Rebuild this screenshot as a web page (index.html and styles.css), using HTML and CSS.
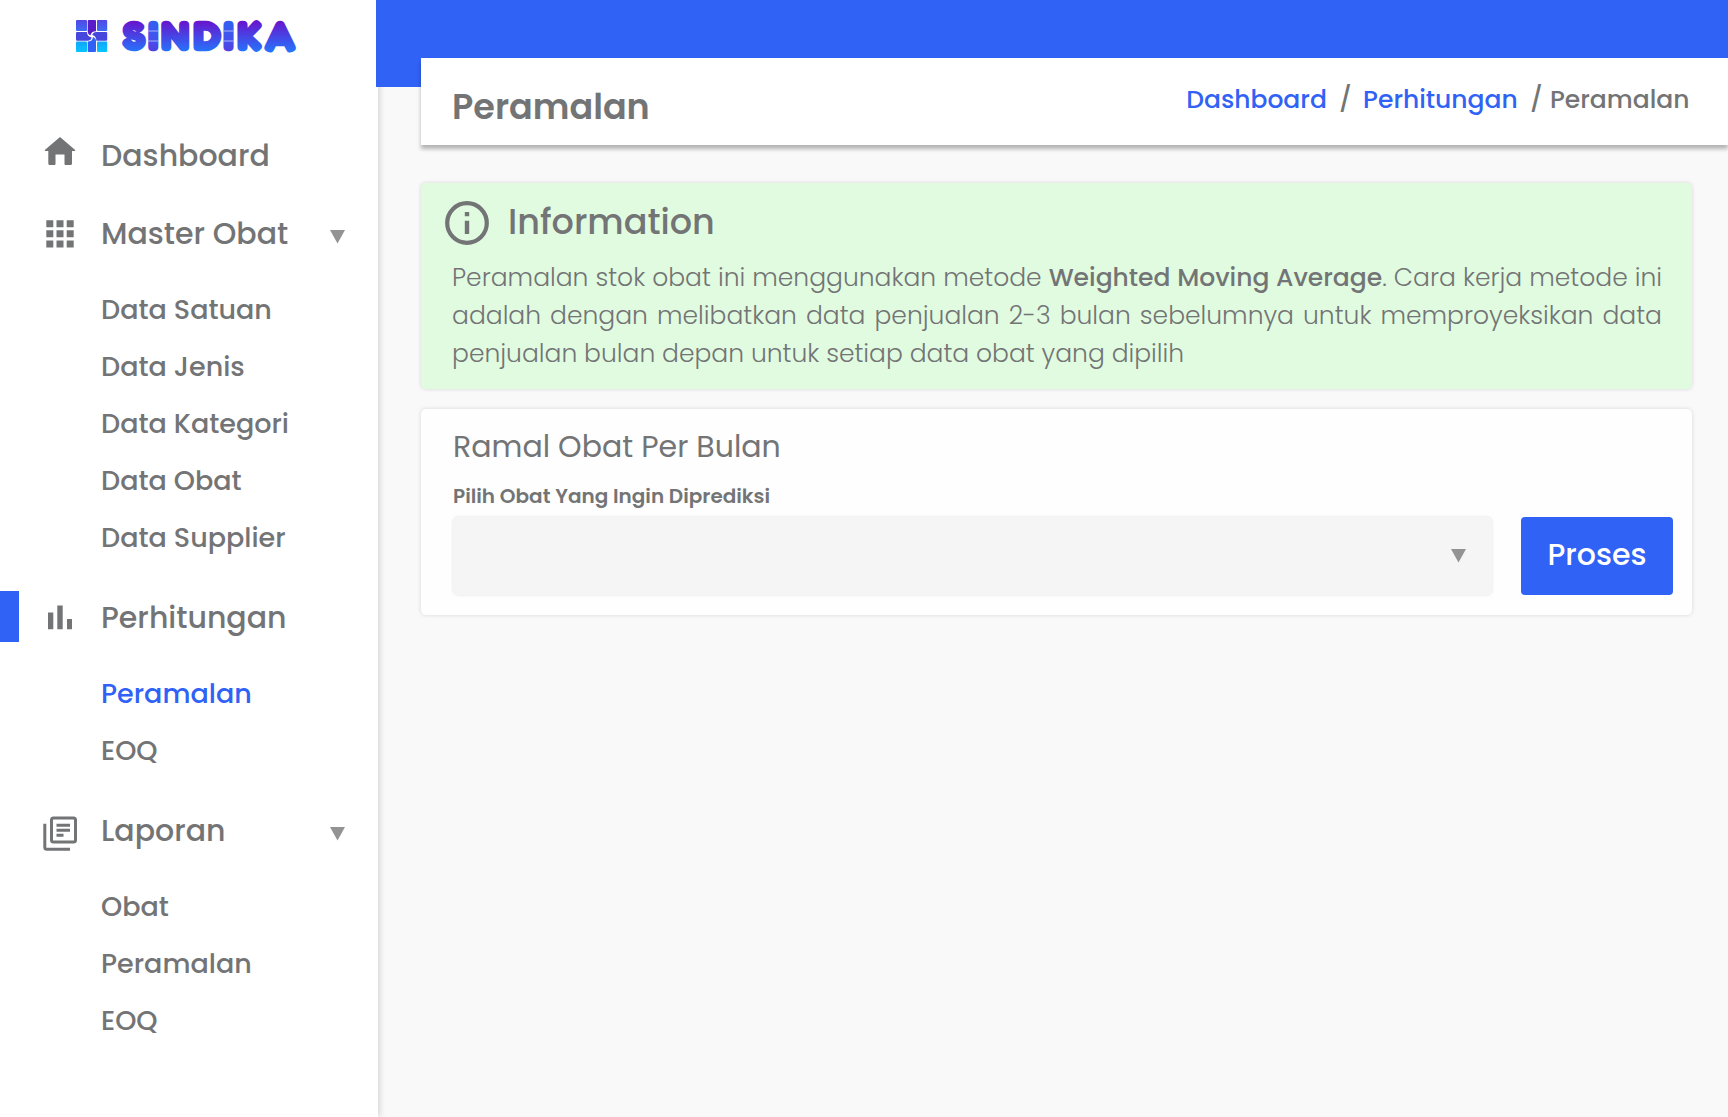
FILE: index.html
```
<!DOCTYPE html>
<html lang="id">
<head>
<meta charset="utf-8">
<title>Sindika - Peramalan</title>
<link rel="stylesheet" href="styles.css">
</head>
<body>
<div class="app">
  <aside class="sidebar">
    <svg class="logo" width="240" height="60" viewBox="66 6 240 60" role="img" aria-label="Sindika">
      <defs>
        <linearGradient id="word" gradientUnits="userSpaceOnUse" x1="0" y1="20" x2="0" y2="52"><stop offset="0" stop-color="#6a11cb"/><stop offset="1" stop-color="#2575fc"/></linearGradient>
        <linearGradient id="stem" gradientUnits="userSpaceOnUse" x1="0" y1="20" x2="0" y2="52"><stop offset="0" stop-color="#2f62f2"/><stop offset=".6" stop-color="#4452ec"/><stop offset="1" stop-color="#5040e0"/></linearGradient>
        <linearGradient id="corner" x1="0" y1="0" x2="0" y2="1"><stop offset="0" stop-color="#5148e4"/><stop offset="1" stop-color="#3f6af6"/></linearGradient>
        <linearGradient id="foot" x1="0" y1="0" x2="0" y2="1"><stop offset="0" stop-color="#12a5fb"/><stop offset="1" stop-color="#06c4ff"/></linearGradient>
      </defs>
      <g>
        <rect x="76" y="20" width="11" height="11" rx="1" fill="url(#corner)"/>
        <rect x="97" y="20" width="10.2" height="11" rx="1" fill="url(#corner)"/>
        <rect x="76" y="41.500" width="11" height="10.500" rx="1" fill="url(#foot)"/>
        <rect x="97" y="41.500" width="10.200" height="10.500" rx="1" fill="url(#foot)"/>
        <path d="M87.700 21q0-1 1-1h6.300q1 0 1 1v10.200q-4.800 0-5.600 4.300-2.700-1-2.700-4z" fill="#5a1cc8"/>
        <path d="M107.200 33v6.500q0 1.300-1 1.300H96.400q0-4.800-4.200-5.800 1-3 4-3h10q1 0 1 1z" fill="#4647dc"/>
        <path d="M96 51q0 1-1 1h-6.300q-1 0-1-1V41.500q4.800 0 5.300-4.500 3 1 3 4z" fill="#2f62f4"/>
        <path d="M76 39.500V33.200q0-1.200 1-1.200h10q0 4.600 4.700 5.600-1 3.200-4 3.200H77q-1 0-1-1.300z" fill="#4647dc"/>
      </g>
      <g class="wordmark" fill="url(#word)" stroke="url(#word)">
        <text x="134" y="50.300">S</text><text x="175.200" y="50.300">N</text><text x="207.200" y="50.300">D</text><text x="249.500" y="50.300">K</text><text x="280" y="50.300">A</text>
      </g>
      <g class="wordmark" fill="url(#stem)" stroke="url(#stem)">
        <text x="153.200" y="50.300">I</text><text x="228.500" y="50.300">I</text>
      </g>
      <path d="M148 31h10.500M148 41h10.500M223 31h10.500M223 41h10.500" stroke="#a9b4f8" stroke-width="1"/>
    </svg>
    <nav class="nav">
      <a class="item">
        <svg class="icon" viewBox="0 0 34 46"><path d="M17 4 32.200 17q.3 1-.7 1H29v12.500q0 1.500-1.500 1.500H22.500q-1 0-1-1v-9.500h-9V31q0 1-1 1H6.800q-1.500 0-1.500-1.500V18H2.500q-1 0-.7-1z"/></svg>
        <span>Dashboard</span>
      </a>
      <a class="item">
        <svg class="icon" viewBox="0 0 34 46"><path d="M3.300 9.200h7v7h-7zm10.200 0h7v7h-7zm10.200 0h7v7h-7zM3.300 19.300h7v7h-7zm10.200 0h7v7h-7zm10.200 0h7v7h-7zM3.300 29.400h7v7h-7zm10.200 0h7v7h-7zm10.200 0h7v7h-7z"/></svg>
        <span>Master Obat</span>
        <svg class="caret" viewBox="0 0 15 14"><path d="M0 0h15L7.500 13.500z"/></svg>
      </a>
      <div class="sub">
        <a>Data Satuan</a><a>Data Jenis</a><a>Data Kategori</a><a>Data Obat</a><a>Data Supplier</a>
      </div>
      <a class="item current">
        <svg class="icon" viewBox="0 0 34 46"><path d="M5 17.500h5.300V34.300H5zM14.300 10.500h5.400v23.800h-5.400zM24 24h5v10.300h-5z"/></svg>
        <span>Perhitungan</span>
      </a>
      <div class="sub">
        <a class="active">Peramalan</a><a>EOQ</a>
      </div>
      <a class="item">
        <svg class="icon outline" viewBox="0 0 34 46"><rect x="8.500" y="10" width="24" height="24" rx="2"/><path d="M1.800 15.800v23.500q0 2 2 2h23.200M13.500 17.200H27M13.500 22.200H27M13.500 27.200h7"/></svg>
        <span>Laporan</span>
        <svg class="caret" viewBox="0 0 15 14"><path d="M0 0h15L7.500 13.500z"/></svg>
      </a>
      <div class="sub">
        <a>Obat</a><a>Peramalan</a><a>EOQ</a>
      </div>
    </nav>
  </aside>
  <main class="main">
    <div class="banner"></div>
    <header class="page-head">
      <h1>Peramalan</h1>
      <div class="crumbs"><a>Dashboard</a><i>/</i><a>Perhitungan</a><i class="last">/</i><span>Peramalan</span></div>
    </header>
    <section class="card info">
      <div class="info-head">
        <svg width="44" height="44" viewBox="0 0 44 44"><circle cx="22" cy="22" r="19.800" fill="none" stroke="#737475" stroke-width="4.200"/><path d="M19.800 11h4.400v4.300h-4.400zM19.800 19.800h4.400V33h-4.400z" fill="#737475"/></svg>
        <h2>Information</h2>
      </div>
      <p>Peramalan stok obat ini menggunakan metode <b>Weighted Moving Average</b>. Cara kerja metode ini adalah dengan melibatkan data penjualan 2-3 bulan sebelumnya untuk memproyeksikan data penjualan bulan depan untuk setiap data obat yang dipilih</p>
    </section>
    <section class="card form">
      <h3>Ramal Obat Per Bulan</h3>
      <label>Pilih Obat Yang Ingin Diprediksi</label>
      <div class="row">
        <div class="select"><svg class="caret" viewBox="0 0 15 14"><path d="M0 0h15L7.500 13.500z"/></svg></div>
        <button>Proses</button>
      </div>
    </section>
  </main>
</div>
</body>
</html>
```
FILE: styles.css
```
* { box-sizing: border-box; }
body {
  margin: 0;
  background: #f9f9f9;
  color: #737475;
  font-family: Poppins, Inter, sans-serif;
  font-weight: 500;
}
h1, h2, h3, p { margin: 0; }
.app { display: flex; height: 1117px; overflow: hidden; }

.sidebar {
  width: 378px;
  flex: none;
  background: #fff;
  box-shadow: 2px 0 6px rgba(0, 0, 0, .14);
}
.logo { display: block; margin: 6px 0 0 66px; }
.wordmark {
  font: 700 41.5px Fredoka, Nunito, Inter, sans-serif;
  text-anchor: middle;
  stroke-width: 2.5px;
  stroke-linejoin: round;
}
.nav { padding-top: 50.5px; }
.item {
  display: flex;
  align-items: center;
  height: 78px;
  padding: 0 33.5px 0 43px;
  font-size: 30px;
}
.item span { flex: 1; margin-left: 24px; }
.icon { width: 34px; height: 46px; fill: #737475; }
.outline { fill: none; stroke: #737475; stroke-width: 3; }
.caret { width: 15px; height: 14px; fill: #939393; }
.item .caret { margin-top: 7px; }
.sub { padding: 8.5px 0 12.5px 101px; font-size: 27px; }
.sub a { display: block; height: 57px; line-height: 57px; }
.active { color: #3062f5; }
.current {
  background: linear-gradient(#3062f5, #3062f5) 0 12px / 19px 51px no-repeat;
}

.main { flex: 1; margin-left: -2px; position: relative; }
.banner { height: 87px; background: #3062f5; }
.page-head {
  display: flex;
  justify-content: space-between;
  height: 87px;
  margin: -29px 0 0 45px;
  padding: 0 38.5px 0 31px;
  background: #fff;
  box-shadow: 0 4px 4px rgba(0, 0, 0, .28);
}
h1 { font-size: 35px; font-weight: 600; line-height: 97px; }
.crumbs { display: flex; font-size: 25px; line-height: 83px; }
.crumbs a { color: #3062f5; }
.crumbs i { margin: 0 11.2px 0 12.2px; font-style: normal; }
.crumbs .last { margin-right: 7.2px; }

.card {
  width: 1271px;
  height: 206px;
  margin-left: 45px;
  border-radius: 5px;
  box-shadow: 0 0 4px rgba(0, 0, 0, .14);
}
.info { margin-top: 38px; padding: 15px 30px 0 31px; background: #e1fbe0; }
.info-head { display: flex; align-items: center; height: 47px; margin-left: -7px; gap: 19px; }
.info-head svg { margin-top: 3px; }
h2 { font-size: 35px; font-weight: 500; line-height: 47px; }
.info p {
  margin-top: 13.5px;
  font-size: 25px;
  font-weight: 300;
  line-height: 38px;
  text-align: justify;
}
.info b { font-weight: 500; }
.form { margin-top: 20px; padding: 15px 19px 0 32px; background: #fefefe; }
h3 { font-size: 30px; font-weight: 400; line-height: 45px; }
label { display: block; margin-top: 12px; font-size: 20px; font-weight: 600; line-height: 30px; }
.row { display: flex; gap: 29px; height: 78px; margin-top: 6px; }
.select {
  display: flex;
  align-items: center;
  justify-content: flex-end;
  flex: 1;
  padding-right: 26.5px;
  border-radius: 5px;
  background: #f5f5f5;
  box-shadow: 0 0 3px rgba(0, 0, 0, .12);
}
button {
  width: 152px;
  padding: 0 0 3px;
  border: 0;
  border-radius: 4px;
  background: #3062f5;
  color: #fff;
  font: inherit;
  font-size: 30px;
}
```
